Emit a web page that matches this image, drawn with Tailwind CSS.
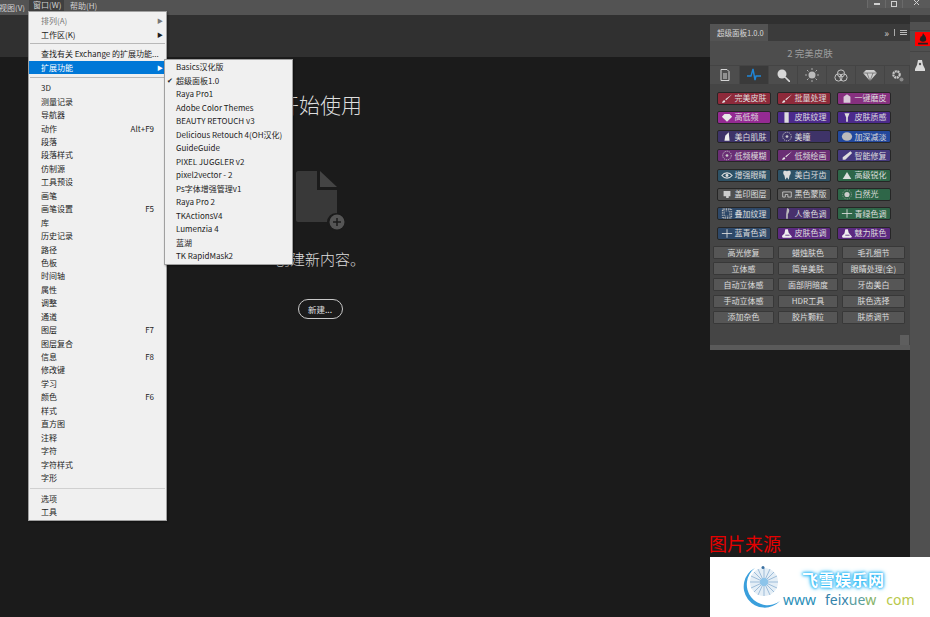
<!DOCTYPE html>
<html lang="zh-CN">
<head>
  <meta charset="UTF-8">
  <title>Photoshop 窗口菜单</title>
  <script src="https://cdn.jsdelivr.net/npm/@tailwindcss/browser@4"></script>
</head>
<body class="bg-[#1b1b1b] overflow-hidden">
<svg width="0" height="0" class="absolute">
  <symbol id="brush" viewBox="0 0 14 12"><path d="M13 1 5 7l1 1 7-7ZM4 8C2 8 2 10 1 11c2 0 4 0 4-2Z" fill="#e4e4e4"/></symbol>
  <symbol id="tag" viewBox="0 0 14 12"><path d="M3 4 7 1l4 3v7H3Z" fill="#d8c8d8"/></symbol>
  <symbol id="gem" viewBox="0 0 14 12"><path d="M4 2h6l3 3-6 6-6-6Z" fill="#e8e8e8"/></symbol>
  <symbol id="bar" viewBox="0 0 14 12"><path d="M4 0h5v12H4Z" fill="#ddd"/></symbol>
  <symbol id="nail" viewBox="0 0 14 12"><path d="M4 1h6L8 6v5H6V6Z" fill="#ddd"/></symbol>
  <symbol id="blade" viewBox="0 0 14 12"><path d="M9 1 5 5l-1 6h6Z" fill="#eee"/></symbol>
  <symbol id="target" viewBox="0 0 14 12"><circle cx="7" cy="6" r="5" fill="none" stroke="#ccc" stroke-dasharray="1.5 1"/><circle cx="7" cy="6" r="1.6" fill="#ccc"/></symbol>
  <symbol id="blob" viewBox="0 0 14 12"><ellipse cx="7" cy="6" rx="6" ry="5" fill="#bbb"/></symbol>
  <symbol id="pen" viewBox="0 0 14 12"><path d="M11 1l2 2-8 8-3 0 0-3Z" fill="#ddd"/></symbol>
  <symbol id="eye" viewBox="0 0 14 12"><path d="M1 6c3-4 9-4 12 0-3 4-9 4-12 0Z" fill="none" stroke="#ddd" stroke-width="1.3"/><circle cx="7" cy="6" r="1.7" fill="#ddd"/></symbol>
  <symbol id="tooth" viewBox="0 0 14 12"><path d="M3 1c2-1 3 0 4 0s2-1 4 0c1 2 0 4-1 5l-1 5-2-3-2 3-1-5C3 5 2 3 3 1Z" fill="#ddd"/></symbol>
  <symbol id="tri" viewBox="0 0 14 12"><path d="M7 2l5 8H2Z" fill="#ddd"/></symbol>
  <symbol id="stamp" viewBox="0 0 14 12"><path d="M3 2h8v6H9v2H6V8H3Z" fill="#ccc"/></symbol>
  <symbol id="mask" viewBox="0 0 14 12"><path d="M2 3h10v6H8V6H5v3H2Z" fill="none" stroke="#ccc"/></symbol>
  <symbol id="sun" viewBox="0 0 14 12"><circle cx="7" cy="6" r="3" fill="#ccc"/><circle cx="7" cy="6" r="5.2" fill="none" stroke="#aaa" stroke-dasharray="1 1.2"/></symbol>
  <symbol id="tex" viewBox="0 0 14 12"><path d="M2 1h10v10H2Z" fill="none" stroke="#bbb" stroke-width="2" stroke-dasharray="1 1"/><path d="M4 3h6v6H4Z" fill="none" stroke="#bbb" stroke-dasharray="1 1"/></symbol>
  <symbol id="portrait" viewBox="0 0 14 12"><path d="M7 0c3 0 3 3 2 5L8 7v5H6V7Z" fill="#bbb"/></symbol>
  <symbol id="cross" viewBox="0 0 14 12"><path d="M1 6h12M7 1v10" stroke="#ddd" fill="none"/></symbol>
  <symbol id="bag" viewBox="0 0 14 12"><path d="M5 1h3l1 4 4 5-2 1H2L1 9l3-3Z" fill="#eee"/><path d="M5 8h5" stroke="#5c2a80"/></symbol>
</svg>

<div class="w-[930px] h-[617px] relative overflow-hidden font-['Noto_Sans_CJK_SC','Liberation_Sans',sans-serif]">
  <!-- 菜单栏 -->
  <div class="h-[15px] bg-[#535353] flex items-center text-[8px] text-[#d0d0d0] leading-none">
    <span class="w-[26px] -ml-[1px] pr-[1px] text-right whitespace-nowrap overflow-hidden">视图(V)</span>
    <span class="ml-[4px] w-[35px] h-[11px] -mt-[4px] pt-[1px] pl-[4px] bg-[#3f3f3f] whitespace-nowrap">窗口(W)</span>
    <span class="ml-[6px] -mt-[4px] whitespace-nowrap">帮助(H)</span>
    <!-- 窗口按钮 -->
    <div class="ml-auto -mt-[7px] flex h-[8px] text-[#c8c8c8]">
      <div class="w-[18px] bg-[#5a5a5a] border-l border-[#6a6a6a] flex items-center justify-center"><div class="w-[6px] h-[2px] bg-[#cfcfcf]"></div></div>
      <div class="w-[17px] bg-[#5a5a5a] border-l border-[#6a6a6a] flex items-center justify-center"><div class="w-[6px] h-[6px] border border-[#cfcfcf]"></div></div>
      <div class="w-[28px] bg-[#5a5a5a] border-l border-[#6a6a6a] flex items-start justify-center"><svg width="7" height="6" viewBox="0 0 7 6"><path d="M1 0l5 5M6 0 1 5" stroke="#d0d0d0" fill="none"/></svg></div>
    </div>
  </div>
  <!-- 选项栏 -->
  <div class="h-[42px] bg-[#303030]"></div>

  <!-- 开始使用 -->
  <div class="w-[640px] flex flex-col items-center text-[#dedede]">
    <h1 class="mt-[33px] h-[28px] text-[21px] leading-[28px] font-light">开始使用</h1>
    <div class="mt-[53px] -ml-[8px] relative w-[41px] h-[60px]">
      <svg width="52" height="60" viewBox="0 0 52 60">
        <path d="M2 0h19v19h20v30c0 1-1 2-2 2H2c-1 0-2-1-2-2V2C0 1 1 0 2 0Z" fill="#393939"/>
        <path d="M24 0 41 16H24Z" fill="#444"/>
        <circle cx="40" cy="51" r="9" fill="#1b1b1b"/>
        <circle cx="41" cy="51" r="7.5" fill="#555"/>
        <path d="M37 51h8M41 47v8" stroke="#1b1b1b" stroke-width="1.5"/>
      </svg>
    </div>
    <p class="mt-[18px] text-[15px] leading-[20px] font-light">创建新内容。</p>
    <button class="mt-[30px] w-[45px] h-[20px] rounded-full border border-[#c8c8c8] text-[8.5px] leading-none text-[#e0e0e0]">新建...</button>
  </div>

  <!-- 窗口菜单 -->
  <div class="absolute left-[28px] top-[11px] w-[139px] h-[510px] bg-[#f0f0f0] border border-[#a0a0a0] text-[8px] leading-[13.5px] text-[#1c1c1c] pt-[2px] pb-[2px] shadow-[1px_1px_2px_rgba(0,0,0,.4)]">
    <div class="h-[13.5px] pl-[12px] pr-[3px] flex justify-between text-[#777]"><span>排列(A)</span><span class="text-[6px]">▶</span></div>
    <div class="h-[13.5px] pl-[12px] pr-[3px] flex justify-between"><span>工作区(K)</span><span class="text-[6px]">▶</span></div>
    <div class="h-px bg-[#b8b8b8] mx-[1px] mt-[1.5px] mb-[3.8px]"></div>
    <div class="h-[13.5px] pl-[12px] whitespace-nowrap">查找有关 Exchange 的扩展功能...</div>
    <div class="h-[13.5px] pl-[12px] pr-[3px] flex justify-between bg-[#0078d7] text-white"><span>扩展功能</span><span class="text-[6px]">▶</span></div>
    <div class="h-px bg-[#b8b8b8] mx-[1px] mt-[3.2px] mb-[2.8px]"></div>
    <div class="pl-[12px] pr-[12px] [&>div]:h-[13.45px]">
      <div>3D</div>
      <div>测量记录</div>
      <div>导航器</div>
      <div class="flex justify-between"><span>动作</span><span>Alt+F9</span></div>
      <div>段落</div>
      <div>段落样式</div>
      <div>仿制源</div>
      <div>工具预设</div>
      <div>画笔</div>
      <div class="flex justify-between"><span>画笔设置</span><span>F5</span></div>
      <div>库</div>
      <div>历史记录</div>
      <div>路径</div>
      <div>色板</div>
      <div>时间轴</div>
      <div>属性</div>
      <div>调整</div>
      <div>通道</div>
      <div class="flex justify-between"><span>图层</span><span>F7</span></div>
      <div>图层复合</div>
      <div class="flex justify-between"><span>信息</span><span>F8</span></div>
      <div>修改键</div>
      <div>学习</div>
      <div class="flex justify-between"><span>颜色</span><span>F6</span></div>
      <div>样式</div>
      <div>直方图</div>
      <div>注释</div>
      <div>字符</div>
      <div>字符样式</div>
      <div>字形</div>
    </div>
    <div class="h-px bg-[#d0d0d0] mx-[1px] mt-[3.2px] mb-[3.2px]"></div>
    <div class="pl-[12px]">
      <div class="h-[13.5px]">选项</div>
      <div class="h-[13.5px]">工具</div>
    </div>
  </div>

  <!-- 扩展功能子菜单 -->
  <div class="absolute left-[164px] top-[59px] w-[129px] h-[206px] bg-[#f0f0f0] border border-[#a0a0a0] pl-[11px] text-[8px] leading-[13.5px] text-[#1c1c1c] shadow-[1px_1px_2px_rgba(0,0,0,.4)]">
    <div class="h-[13.5px]">Basics汉化版</div>
    <div class="h-[13.5px] relative"><span class="absolute -left-[9px] text-[7px]">✔</span>超级面板1.0</div>
    <div class="h-[13.5px]">Raya Pro1</div>
    <div class="h-[13.5px]">Adobe Color Themes</div>
    <div class="h-[13.5px]">BEAUTY RETOUCH v3</div>
    <div class="h-[13.5px] whitespace-nowrap">Delicious Retouch 4(OH汉化)</div>
    <div class="h-[13.5px]">GuideGuide</div>
    <div class="h-[13.5px]">PIXEL JUGGLER v2</div>
    <div class="h-[13.5px]">pixel2vector - 2</div>
    <div class="h-[13.5px]">Ps字体增强管理v1</div>
    <div class="h-[13.5px]">Raya Pro 2</div>
    <div class="h-[13.5px]">TKActionsV4</div>
    <div class="h-[13.5px]">Lumenzia 4</div>
    <div class="h-[13.5px]">蓝湖</div>
    <div class="h-[13.5px]">TK RapidMask2</div>
  </div>

  <!-- 超级面板 -->
  <div class="absolute left-[710px] top-[24px] w-[200px] h-[326px] bg-[#454545] text-[8px] leading-none text-[#dcdcdc]">
    <div class="h-[17px] bg-[#3b3b3b] flex items-center">
      <div class="w-[58px] h-full bg-[#535353] flex items-center pl-[7px] text-[7.5px] text-[#d8d8d8] whitespace-nowrap">超级面板1.0.0</div>
      <div class="ml-auto flex items-center pr-[3px] text-[#c8c8c8] text-[10px]">
        <span>»</span><div class="w-px h-[7px] bg-[#aaa] mx-[5px]"></div>
        <div class="w-[7px] h-[5px] border-y border-[#bbb] flex items-center"><div class="w-full h-px bg-[#bbb]"></div></div>
      </div>
    </div>
    <div class="h-[24px] pt-[2px] bg-[#4d4d4d] flex items-center justify-center text-[9.5px] text-[#9e9e9e]">2 完美皮肤</div>
    <div class="h-[19px] pl-[1px] bg-[#4d4d4d] border-t border-[#444] grid grid-cols-[repeat(6,29px)_25px] [&>div]:border-r [&>div]:border-[#444]">
      <div class="flex items-center justify-center"><svg width="10" height="12" viewBox="0 0 10 12"><path d="M1 .5h6l2 2v9H1Z" fill="none" stroke="#d4d4d4"/><path d="M3 5h4M3 7h4M3 9h4" stroke="#d4d4d4"/></svg></div>
      <div class="bg-[#3a3a3a] flex items-center justify-center"><svg width="14" height="14" viewBox="0 0 14 14"><path d="M0 8h4l2-7 2 11 1-4h5" fill="none" stroke="#1f86d8" stroke-width="1.4"/></svg></div>
      <div class="flex items-center justify-center"><svg width="13" height="13" viewBox="0 0 13 13"><circle cx="5" cy="5" r="4.5" fill="#d8d8d8"/><path d="M8 8l5 5" stroke="#d8d8d8" stroke-width="1.6"/></svg></div>
      <div class="flex items-center justify-center"><svg width="14" height="14" viewBox="0 0 14 14"><circle cx="7" cy="7" r="3.5" fill="#bbb"/><path d="M7 0v2M7 12v2M0 7h2M12 7h2M2 2l1.5 1.5M12 2l-1.5 1.5M2 12l1.5-1.5M12 12l-1.5-1.5" stroke="#aaa"/></svg></div>
      <div class="flex items-center justify-center"><svg width="14" height="13" viewBox="0 0 14 13"><circle cx="7" cy="4.5" r="3.6" fill="none" stroke="#c4c4c4"/><circle cx="4.5" cy="8.5" r="3.6" fill="none" stroke="#c4c4c4"/><circle cx="9.5" cy="8.5" r="3.6" fill="none" stroke="#c4c4c4"/></svg></div>
      <div class="flex items-center justify-center"><svg width="14" height="12" viewBox="0 0 14 12"><path d="M3 1h8l3 3-7 8-7-8Z" fill="#cfcfcf"/><path d="M0 4h14M4 4l3 8 3-8" stroke="#4d4d4d" stroke-width=".6" fill="none"/></svg></div>
      <div class="flex items-center justify-center"><svg width="13" height="13" viewBox="0 0 13 13"><circle cx="5.500" cy="5.500" r="3.200" fill="none" stroke="#c8c8c8" stroke-width="2.200" stroke-dasharray="2 .6"/><circle cx="10.500" cy="10.500" r="2" fill="#8a8a8a"/></svg></div>
    </div>

    <!-- 彩色按钮 -->
    <div class="mt-[7.5px] ml-[6.5px] grid grid-cols-[54px_54px_54px] gap-x-[6px] gap-y-[6.3px] [&>div]:h-[13px] [&>div]:rounded-[2px] [&>div]:border [&>div]:border-[#262626] [&>div]:flex [&>div]:items-center [&>div]:pl-[3px] [&>div]:gap-[2px] [&>div]:whitespace-nowrap [&>div]:overflow-hidden [&_svg]:shrink-0">
      <div class="bg-[#8e2a3a]"><svg width="12" height="11"><use href="#brush"/></svg>完美皮肤</div>
      <div class="bg-[#8e2a3a]"><svg width="12" height="11"><use href="#brush"/></svg>批量处理</div>
      <div class="bg-[#86307f]"><svg width="12" height="11"><use href="#tag"/></svg>一键磨皮</div>
      <div class="bg-[#942a92]"><svg width="12" height="11"><use href="#gem"/></svg>高低频</div>
      <div class="bg-[#4c2a8c]"><svg width="12" height="11"><use href="#bar"/></svg>皮肤纹理</div>
      <div class="bg-[#4c2a8c]"><svg width="12" height="11"><use href="#nail"/></svg>皮肤质感</div>
      <div class="bg-[#3e3368]"><svg width="12" height="11"><use href="#blade"/></svg>美白肌肤</div>
      <div class="bg-[#3e3368]"><svg width="12" height="11"><use href="#target"/></svg>美瞳</div>
      <div class="bg-[#23489c]"><svg width="12" height="11"><use href="#blob"/></svg>加深减淡</div>
      <div class="bg-[#6a2e74]"><svg width="12" height="11"><use href="#target"/></svg>低频模糊</div>
      <div class="bg-[#6a2e74]"><svg width="12" height="11"><use href="#brush"/></svg>低频绘画</div>
      <div class="bg-[#45397e]"><svg width="12" height="11"><use href="#pen"/></svg>智能修复</div>
      <div class="bg-[#2e5266]"><svg width="12" height="11"><use href="#eye"/></svg>增强眼睛</div>
      <div class="bg-[#2e5266]"><svg width="12" height="11"><use href="#tooth"/></svg>美白牙齿</div>
      <div class="bg-[#2e6648]"><svg width="12" height="11"><use href="#tri"/></svg>高级锐化</div>
      <div class="bg-[#505050]"><svg width="12" height="11"><use href="#stamp"/></svg>盖印图层</div>
      <div class="bg-[#505050]"><svg width="12" height="11"><use href="#mask"/></svg>黑色蒙版</div>
      <div class="bg-[#2e6648]"><svg width="12" height="11"><use href="#sun"/></svg>白然光</div>
      <div class="bg-[#2e4868]"><svg width="12" height="11"><use href="#tex"/></svg>叠加纹理</div>
      <div class="bg-[#48306c]"><svg width="12" height="11"><use href="#portrait"/></svg>人像色调</div>
      <div class="bg-[#2e6648]"><svg width="12" height="11"><use href="#cross"/></svg>青绿色调</div>
      <div class="bg-[#2e4868]"><svg width="12" height="11"><use href="#cross"/></svg>蓝青色调</div>
      <div class="bg-[#5c2a80]"><svg width="12" height="11"><use href="#bag"/></svg>皮肤色调</div>
      <div class="bg-[#5c2a80]"><svg width="12" height="11"><use href="#bag"/></svg>魅力肤色</div>
    </div>

    <!-- 灰色按钮 -->
    <div class="mt-[6.5px] ml-[3px] grid grid-cols-[61px_60px_63px] gap-x-[4px] gap-y-[3.2px] [&>div]:h-[13px] [&>div]:rounded-[1px] [&>div]:bg-[#565656] [&>div]:border [&>div]:border-[#383838] [&>div]:flex [&>div]:items-center [&>div]:justify-center [&>div]:whitespace-nowrap">
      <div>高光修复</div><div>蜡烛肤色</div><div>毛孔细节</div>
      <div>立体感</div><div>简单美肤</div><div>眼睛处理(全)</div>
      <div>自动立体感</div><div>面部阴暗度</div><div>牙齿美白</div>
      <div>手动立体感</div><div>HDR工具</div><div>肤色选择</div>
      <div>添加杂色</div><div>胶片颗粒</div><div>肤质调节</div>
    </div>

    <div class="absolute right-[1px] bottom-[5px] w-[9px] h-[10px] bg-[#5e5e5e]"></div>
    <div class="absolute left-0 right-0 bottom-0 h-[5px] bg-[#5a5a5a]"></div>
  </div>

  <!-- 右侧停靠栏 -->
  <div class="absolute left-[910px] top-[15px] w-[20px] h-[542px] bg-[#505050]">
    <div class="h-[7px] bg-[#3a3a3a]"></div>
    <div class="h-[22px] mt-[8px] border-y border-[#444]">
      <div class="ml-[5px] mt-[1px] h-[14px] bg-[#ff0000] flex items-center justify-center"><svg width="12" height="12" viewBox="0 0 11 11"><path d="M5.500 0c1 2 3 3 3 6 0 1-1 2-3 2s-3-1-3-2c0-1 1-2 1-3 1 0 1 1 2-3ZM1 9h9v1.500H1Z" fill="#222"/></svg></div>
    </div>
    <div class="mt-[8px] flex justify-center"><svg width="10" height="11" viewBox="0 0 10 11"><path d="M3 0h4l1 5 2 4v2H0V9l2-4Z" fill="#dadada"/><circle cx="5" cy="4" r="1.200" fill="#535353"/></svg></div>
  </div>

  <!-- 图片来源 -->
  <div class="absolute left-[709px] top-[531px] text-[18px] leading-[24px] text-[#e60000]">图片来源</div>
  <div class="absolute left-[710px] top-[557px] w-[220px] h-[60px] bg-white overflow-hidden">
    <svg class="absolute left-[32px] top-[9px]" width="46" height="44" viewBox="0 0 46 44">
      <path d="M13 2A21 21 0 1 0 38 35 19 19 0 0 1 13 2Z" fill="#3a9fdc"/>
      <circle cx="22" cy="16" r="14" fill="#e4eef6"/>
      <path d="M22 2v28M8 16h28M12 6l20 20M32 6 12 26M16 3l12 26M28 3 16 29M9 10l26 12M35 10 9 22" stroke="#9dbcd9" stroke-width="1"/>
      <circle cx="22" cy="16" r="4" fill="#8cc4ea"/>
      <circle cx="21" cy="1.500" r="1.500" fill="#3a6fa0"/>
    </svg>
    <div class="absolute left-[92px] top-[12px] text-[16px] leading-[20px] font-bold tracking-[0.5px] text-white [text-shadow:0_0_3px_#26b6f5,0_0_3px_#26b6f5,0_0_5px_#26b6f5]">飞雪娱乐网</div>
    <div class="absolute left-[73px] top-[33px] flex text-[14px] leading-[20px] font-['Noto_Sans',sans-serif] whitespace-pre">
      <span class="text-[#2a8fb8]">www</span><span class="ml-[9px] text-[#3583ab]">feix</span><span class="text-[#5a9ea0]">ue</span><span class="text-[#86b26a]">w</span><span class="ml-[10px] text-[#b8c84a]">com</span>
    </div>
  </div>
</div>
</body>
</html>
